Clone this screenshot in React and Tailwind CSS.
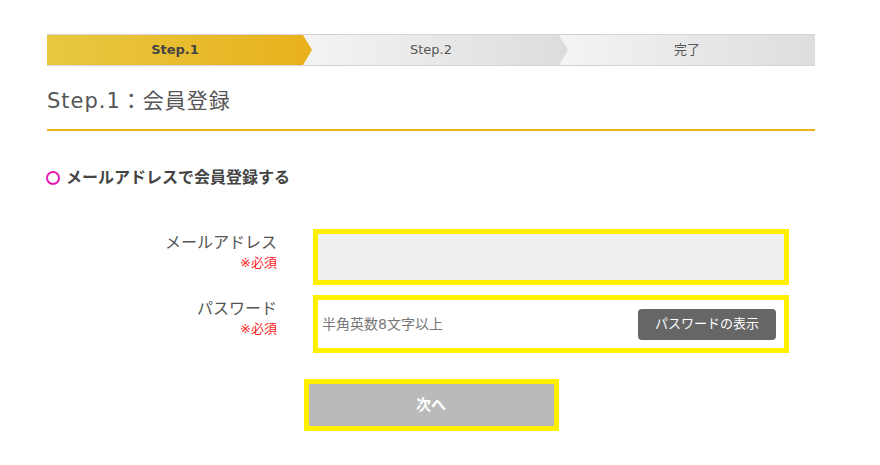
const jp = "font-['DejaVu_Sans','Noto_Sans_CJK_JP',sans-serif]"

const steps = [
  { label: 'Step.1', active: true },
  { label: 'Step.2' },
  { label: '完了' },
]

const StepBar = () => (
  <div className="flex h-[32px] border-y border-[#d4d4d4]">
    {steps.map((s, i) => (
      <div
        key={s.label}
        className={
          'relative flex-1 flex items-center justify-center text-[13px] ' +
          (s.active
            ? 'bg-gradient-to-r from-[#e7c83f] to-[#e9b21d] font-bold text-[#444]'
            : 'bg-gradient-to-r from-[#f4f4f4] to-[#dddddd] text-[#555]')
        }
      >
        {s.label}
        {i < steps.length - 1 && (
          <div
            className={
              'absolute top-0 right-[-9px] z-10 h-full w-[9px] [clip-path:polygon(0_0,100%_50%,0_100%)] ' +
              (s.active ? 'bg-[#e9b21d]' : 'bg-[#dcdcdc]')
            }
          />
        )}
      </div>
    ))}
  </div>
)

const Label = ({ children }) => (
  <div className="w-[230px] shrink-0 text-right pt-[2px]">
    <div className="text-[16px] leading-[24px] text-[#555]">{children}</div>
    <div className="text-[13px] leading-[16px] text-[#f22]">※必須</div>
  </div>
)

export default function App() {
  return (
    <div className={`min-h-screen bg-white ${jp}`}>
      <div className="ml-[47px] w-[768px] pt-[34px]">
        <StepBar />

        <h1 className="mt-[20px] pb-[13px] border-b-2 border-[#e9b21d] text-[21px] leading-[30px] tracking-[1px] text-[#555] font-normal">
          Step.1：会員登録
        </h1>

        <div className="mt-[35px] flex items-center gap-[6px] h-[24px]">
          <span className="ml-[-1px] w-[14px] h-[14px] rounded-full border-[2.5px] border-[#e61cb4]" />
          <span className="text-[16px] font-bold text-[#444] leading-[24px]">
            メールアドレスで会員登録する
          </span>
        </div>

        <div className="mt-[39px] flex flex-col gap-[10px]">
          <div className="flex gap-[36px]">
            <Label>メールアドレス</Label>
            <div className="w-[476px] h-[56px] border-[5px] border-[#fff000] bg-[#efefef]" />
          </div>
          <div className="flex gap-[36px]">
            <Label>パスワード</Label>
            <div className="w-[476px] h-[58px] border-[5px] border-[#fff000] bg-white flex items-center pl-[4px] pr-[8px]">
              <span className="flex-1 text-[14px] text-[#777]">半角英数8文字以上</span>
              <button className="h-[31px] w-[138px] rounded-[4px] bg-[#666] text-white text-[13px]">
                パスワードの表示
              </button>
            </div>
          </div>
        </div>

        <div className="mt-[26px] flex justify-center">
          <button className="w-[255px] h-[52px] border-[5px] border-[#fff000] bg-[#bababa] text-white text-[15px] font-bold">
            次へ
          </button>
        </div>
      </div>
    </div>
  )
}
